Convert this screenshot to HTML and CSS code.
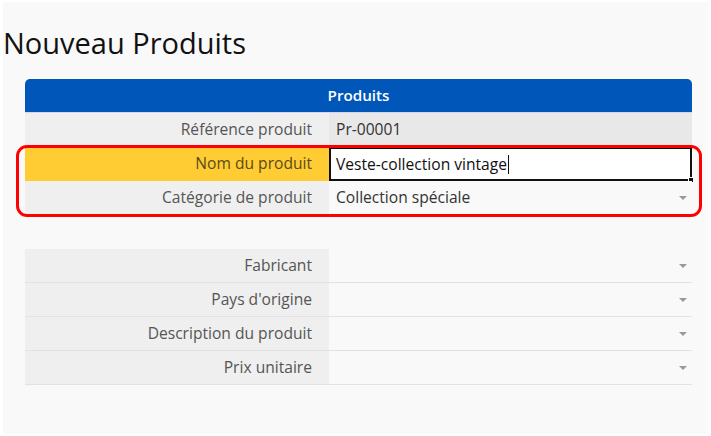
FILE: index.html
```html
<!DOCTYPE html>
<html lang="fr">
<head>
<meta charset="utf-8">
<link rel="stylesheet" href="styles.css">
</head>
<body>
<div class="page">
  <h1 class="title">Nouveau Produits</h1>
  <div class="form">
    <div class="header">Produits</div>
    <div class="row ref">
      <div class="label">Référence produit</div>
      <div class="value">Pr-00001</div>
    </div>
    <div class="highlight">
      <div class="row name">
        <div class="label">Nom du produit</div>
        <div class="value edit"><span>Veste-collection vintage</span><span class="caret"></span><span class="handle"></span></div>
      </div>
      <div class="row">
        <div class="label">Catégorie de produit</div>
        <div class="value">Collection spéciale<span class="arrow"></span></div>
      </div>
    </div>
  </div>
  <div class="form second">
    <div class="row line">
      <div class="label">Fabricant</div>
      <div class="value"><span class="arrow"></span></div>
    </div>
    <div class="row line">
      <div class="label">Pays d'origine</div>
      <div class="value"><span class="arrow"></span></div>
    </div>
    <div class="row line">
      <div class="label">Description du produit</div>
      <div class="value"><span class="arrow"></span></div>
    </div>
    <div class="row line">
      <div class="label">Prix unitaire</div>
      <div class="value"><span class="arrow"></span></div>
    </div>
  </div>
</div>
</body>
</html>
```

FILE: styles.css
```css
* { box-sizing: border-box; }
html, body { margin: 0; padding: 0; background: #ffffff; }
body { font-family: "Open Sans", "DejaVu Sans", sans-serif; }
.page {
  margin: 2px 3px 0 3px;
  height: 432px;
  background: #f9f9f9;
  padding: 21px 0 0 0;
  position: relative;
}
.title {
  margin: 0 0 0 0;
  font-weight: 400;
  font-size: 29px;
  line-height: 40px;
  color: #111;
}
.form {
  margin: 16px 0 0 22px;
  width: 667px;
  position: relative;
}
.header {
  height: 34px;
  background: #0056b9;
  border-radius: 5px 5px 0 0;
  border-bottom: 1px solid #cfd9ea;
  color: #fff;
  font-weight: 600;
  font-size: 15.2px;
  line-height: 33px;
  text-align: center;
}
.row {
  display: flex;
  height: 34px;
  font-size: 15.6px;
}
.label {
  width: 304px;
  background: #efefef;
  color: #555;
  text-align: right;
  padding-right: 17px;
  line-height: 33px;
  flex: none;
}
.value {
  flex: 1;
  position: relative;
  color: #333;
  padding-left: 7px;
  line-height: 33px;
  background: #f9f9f9;
}
.ref .value { background: #e8e8e8; }
.highlight { position: relative; }
.highlight::before {
  content: "";
  position: absolute;
  left: -9px;
  right: -10px;
  top: -2px;
  bottom: -2px;
  border: 3px solid #ff0000;
  border-radius: 11px;
  pointer-events: none;
  z-index: 2;
}
.name .label { background: #ffcc33; color: #5a4a1a; }
.edit {
  background: #fff;
  border: 2px solid #111;
  color: #111;
  padding-left: 5px;
  line-height: 29px;
  display: flex;
  align-items: center;
}
.caret {
  display: inline-block;
  width: 1px;
  height: 19px;
  background: #111;
  margin-left: 1px;
}
.handle {
  position: absolute;
  right: -4px;
  bottom: -4px;
  width: 6px;
  height: 6px;
  background: #111;
  border: 1px solid #fff;
}
.arrow {
  position: absolute;
  right: 5px;
  top: 15px;
  width: 0;
  height: 0;
  border-left: 4px solid transparent;
  border-right: 4px solid transparent;
  border-top: 4px solid #999;
}
.second { margin-top: 34px; }
.line { border-bottom: 1px solid #e2e2e2; }
.line .label { line-height: 33px; }
```
